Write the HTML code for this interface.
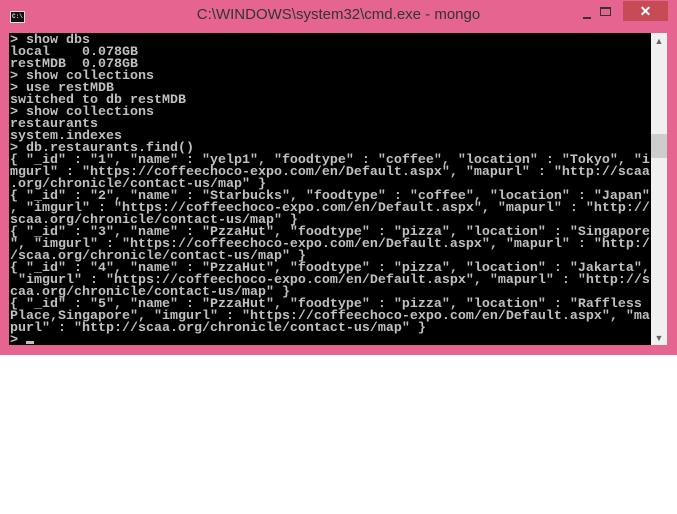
<!DOCTYPE html>
<html><head><style>
html,body{margin:0;padding:0;width:677px;height:514px;background:#fff;overflow:hidden}
.win{position:absolute;left:0;top:0;width:677px;height:355px;background:#e56590}
.title{position:absolute;left:0;top:6px;width:677px;text-align:center;font:15px "Liberation Sans",sans-serif;color:#333}
.icon{position:absolute;left:10px;top:11px;width:15px;height:12px;background:#111;border:1px solid #ddd;box-sizing:border-box}
.icon span{position:absolute;left:1px;top:1px;font:bold 6px "Liberation Mono",monospace;color:#ddd}
.min{position:absolute;left:583px;top:17px;width:8px;height:2px;background:#333}
.max{position:absolute;left:600px;top:7px;width:11px;height:9px;border:1px solid #333;border-top-width:2px;box-sizing:border-box}
.close{position:absolute;left:623px;top:1px;width:45px;height:20px;background:#c74b55;color:#fff;text-align:center;font:bold 14px "Liberation Sans",sans-serif;line-height:20px}
.con{position:absolute;left:9px;top:33px;width:642px;height:312px;background:#000;overflow:hidden}
pre{margin:0;padding-left:1px;padding-top:2px;font:bold 13.33px/12px "Liberation Mono",monospace;color:#c0c0c0}
.sb{position:absolute;left:651px;top:33px;width:16px;height:312px;background:#f0f0f0}
.thumb{position:absolute;left:651px;top:134px;width:16px;height:24px;background:#cdcdcd}
.ar{position:absolute;left:651px;width:16px;text-align:center;font:9px "Liberation Sans",sans-serif;color:#666}
.cur{display:inline-block;width:8px;height:3px;background:#c0c0c0;vertical-align:-1px}
</style></head><body>
<div class="win">
<div class="icon"><span>C:\</span></div>
<div class="title">C:\WINDOWS\system32\cmd.exe - mongo</div>
<div class="min"></div><div class="max"></div><div class="close">✕</div>
<div class="con"><pre>&gt; show dbs
local    0.078GB
restMDB  0.078GB
&gt; show collections
&gt; use restMDB
switched to db restMDB
&gt; show collections
restaurants
system.indexes
&gt; db.restaurants.find()
{ "_id" : "1", "name" : "yelp1", "foodtype" : "coffee", "location" : "Tokyo", "i
mgurl" : "https://coffeechoco-expo.com/en/Default.aspx", "mapurl" : "http://scaa
.org/chronicle/contact-us/map" }
{ "_id" : "2", "name" : "Starbucks", "foodtype" : "coffee", "location" : "Japan"
, "imgurl" : "https://coffeechoco-expo.com/en/Default.aspx", "mapurl" : "http://
scaa.org/chronicle/contact-us/map" }
{ "_id" : "3", "name" : "PzzaHut", "foodtype" : "pizza", "location" : "Singapore
", "imgurl" : "https://coffeechoco-expo.com/en/Default.aspx", "mapurl" : "http:/
/scaa.org/chronicle/contact-us/map" }
{ "_id" : "4", "name" : "PzzaHut", "foodtype" : "pizza", "location" : "Jakarta",
 "imgurl" : "https://coffeechoco-expo.com/en/Default.aspx", "mapurl" : "http://s
caa.org/chronicle/contact-us/map" }
{ "_id" : "5", "name" : "PzzaHut", "foodtype" : "pizza", "location" : "Raffless
Place,Singapore", "imgurl" : "https://coffeechoco-expo.com/en/Default.aspx", "ma
purl" : "http://scaa.org/chronicle/contact-us/map" }
&gt; <span class="cur"></span></pre></div>
<div class="sb"></div><div class="thumb"></div>
<div class="ar" style="top:36px">&#9650;</div>
<div class="ar" style="top:333px">&#9660;</div>
</div>
</body></html>
